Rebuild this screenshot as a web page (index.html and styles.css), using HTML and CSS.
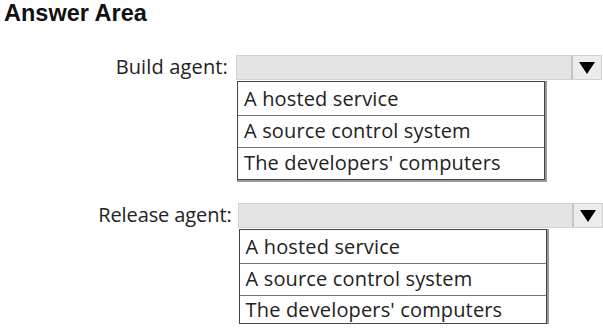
FILE: index.html
```html
<!DOCTYPE html>
<html lang="en">
<head>
    <meta charset="UTF-8">
    <title>Answer Area</title>
    <link rel="stylesheet" href="styles.css">
</head>
<body>
    <h2 class="title">Answer Area</h2>

    <div class="question">
        <div class="label">Build agent:</div>
        <div class="field">
            <div class="select">
                <div class="select-value"></div>
                <div class="select-arrow">
                    <svg width="16" height="12" viewBox="0 0 16 12"><polygon points="0,0 16,0 8,12" fill="#000"/></svg>
                </div>
            </div>
            <div class="options">
                <div class="option">A hosted service</div>
                <div class="option">A source control system</div>
                <div class="option">The developers' computers</div>
            </div>
        </div>
    </div>

    <div class="question release">
        <div class="label">Release agent:</div>
        <div class="field">
            <div class="select">
                <div class="select-value"></div>
                <div class="select-arrow">
                    <svg width="16" height="12" viewBox="0 0 16 12"><polygon points="0,0 16,0 8,12" fill="#000"/></svg>
                </div>
            </div>
            <div class="options">
                <div class="option">A hosted service</div>
                <div class="option">A source control system</div>
                <div class="option">The developers' computers</div>
            </div>
        </div>
    </div>
</body>
</html>
```

FILE: styles.css
```css
body {
    margin: 0;
    background-color: #ffffff;
    color: #222222;
    font-family: "Open Sans", sans-serif;
}

.title {
    margin: 0;
    padding: 0 0 0 4px;
    font-family: "Liberation Sans", Arial, sans-serif;
    font-size: 23.5px;
    font-weight: bold;
    line-height: 26px;
    color: #111111;
}

.question {
    display: flex;
    margin-top: 29px;
}

.question.release {
    margin-top: 23px;
}

.label {
    width: 236px;
    text-align: right;
    font-size: 20px;
    line-height: 24px;
    padding-right: 8px;
    box-sizing: border-box;
    letter-spacing: 0.15px;
}

.release .label {
    width: 238px;
    padding-right: 6px;
    letter-spacing: -0.1px;
}

.field {
    display: flex;
    flex-direction: column;
    width: 366px;
}

.select {
    display: flex;
    height: 25px;
    background-color: #e4e4e4;
    border: 1px solid #d2d2d2;
    box-sizing: border-box;
}

.select-value {
    flex: 1;
}

.select-arrow {
    width: 28px;
    border-left: 2px solid #c4c4c4;
    display: flex;
    align-items: center;
    justify-content: center;
    background-color: #ececec;
}

.options {
    width: 306px;
    margin-top: 1px;
    margin-left: 1px;
    border: 1px solid #444444;
    box-shadow: 1px 1px 0 1px #9a9a9a;
}

.option {
    height: 31px;
    line-height: 30px;
    padding-left: 6px;
    font-size: 20px;
    letter-spacing: 0.15px;
    border-top: 1px solid #777777;
}

.option:first-child {
    border-top: none;
    height: 33px;
    line-height: 34px;
}

.release .option:last-child {
    height: 27px;
    line-height: 27px;
}
```
